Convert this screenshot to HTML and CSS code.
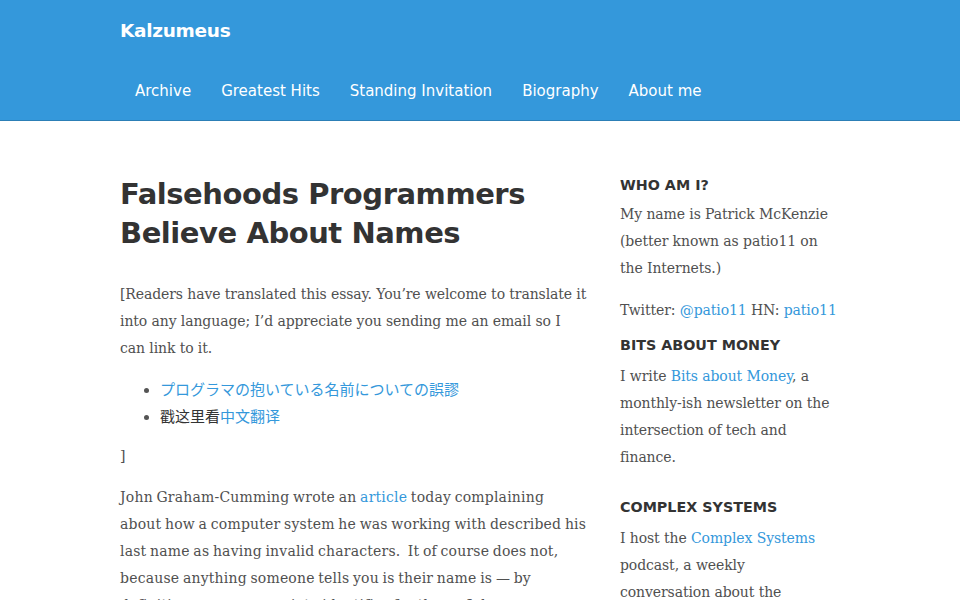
FILE: index.html
```html
<!DOCTYPE html>
<html lang="en">
<head>
  <meta charset="UTF-8">
  <meta name="viewport" content="width=device-width, initial-scale=1.0">
  <title>Falsehoods Programmers Believe About Names | Kalzumeus</title>
  <link rel="stylesheet" href="styles.css">
</head>
<body>

  <!-- Site Header -->
  <header class="site-header">
    <div class="wrap">
      <a class="brand" href="#">Kalzumeus</a>
      <nav class="nav">
        <a href="#">Archive</a>
        <a href="#">Greatest Hits</a>
        <a href="#">Standing Invitation</a>
        <a href="#">Biography</a>
        <a href="#">About me</a>
      </nav>
    </div>
  </header>

  <div class="wrap content">

    <!-- Post -->
    <main class="post">
      <h1 class="post-title">Falsehoods Programmers Believe About Names</h1>

      <p>[Readers have translated this essay. You’re welcome to translate it into any language; I’d appreciate you sending me an email so I can link to it.</p>
      <ul class="translations">
        <li lang="ja"><a href="#">プログラマの抱いている名前についての誤謬</a></li>
        <li lang="zh">戳这里看<a href="#">中文翻译</a></li>
      </ul>
      <p>]</p>
      <p class="loose">John Graham-Cumming wrote an <a href="#">article</a> today complaining about how a computer system he was working with described his last name as having invalid characters.&nbsp; It of course does not, because anything someone tells you is their name is — by definition — an appropriate identifier for them.&nbsp; John was understandably vexed about this situation, and he has every right to be, because names are central to our identities, virtually by definition.</p>
    </main>

    <!-- Sidebar -->
    <aside class="sidebar">
      <section class="widget">
        <h3>Who am I?</h3>
        <p>My name is Patrick McKenzie (better known as patio11 on the Internets.)</p>
        <p class="tight">Twitter: <a href="#">@patio11</a> HN: <a href="#">patio11</a></p>
      </section>
      <section class="widget">
        <h3>Bits about Money</h3>
        <p>I write <a href="#">Bits about Money</a>, a monthly-ish newsletter on the intersection of tech and finance.</p>
      </section>
      <section class="widget">
        <h3>Complex Systems</h3>
        <p>I host the <a href="#">Complex Systems</a> podcast, a weekly conversation about the infrastructure of the world.</p>
      </section>
    </aside>

  </div>

</body>
</html>
```

FILE: styles.css
```css
/* General Styles */
body {
  margin: 0;
  font-family: 'DejaVu Serif', 'Liberation Serif', serif;
  font-size: 14px;
  line-height: 27px;
  letter-spacing: -0.1px;
  color: #505050;
  background: #fff;
}

a {
  color: #3498db;
  text-decoration: none;
}

.wrap {
  width: 720px;
  margin: 0 auto;
}

/* Header */
.site-header {
  background: #3498db;
  border-bottom: 1px solid #2c7fb6;
  height: 120px;
  font-family: 'DejaVu Sans', 'Open Sans', sans-serif;
  letter-spacing: 0;
}

.brand {
  display: block;
  padding-top: 20px;
  height: 41px;
  color: #fff;
  font-weight: bold;
  font-size: 18.5px;
  line-height: 22px;
  letter-spacing: -0.3px;
}

.nav {
  display: flex;
  height: 60px;
  align-items: center;
}

.nav a {
  color: #fff;
  font-size: 15px;
  padding: 0 15px;
}

/* Layout */
.content {
  display: flex;
  justify-content: space-between;
  padding-top: 54px;
}

.post {
  width: 468px;
}

.sidebar {
  width: 217px;
  margin-right: 3px;
}

/* Post */
.post-title {
  font-family: 'DejaVu Sans', 'Open Sans', sans-serif;
  font-size: 29px;
  line-height: 39px;
  font-weight: bold;
  color: #333;
  margin: 0 0 28px;
  letter-spacing: -0.45px;
}

.post p {
  margin: 0 0 14px;
}

.post p.loose {
  letter-spacing: 0.19px;
  word-spacing: -1px;
}

.translations {
  margin: -1px 0 14px;
  padding-left: 40px;
  font-family: 'Noto Sans CJK JP', 'Noto Sans CJK SC', sans-serif;
  font-size: 15px;
  letter-spacing: 0;
  color: #333;
}

.translations li::marker {
  color: #555;
  font-size: 12px;
}

.translations li[lang="zh"] {
  font-family: 'Noto Sans CJK SC', sans-serif;
}

/* Sidebar */
.widget h3 {
  font-family: 'DejaVu Sans', 'Open Sans', sans-serif;
  font-size: 14.3px;
  line-height: 20px;
  font-weight: bold;
  text-transform: uppercase;
  color: #333;
  letter-spacing: 0;
  margin: 0 0 6px;
}

.widget + .widget h3 {
  margin-bottom: 8px;
}

.widget p {
  margin: 0 0 15px;
}

.widget p.tight {
  margin-bottom: 11px;
}

.widget + .widget + .widget {
  margin-top: 26px;
}
```
